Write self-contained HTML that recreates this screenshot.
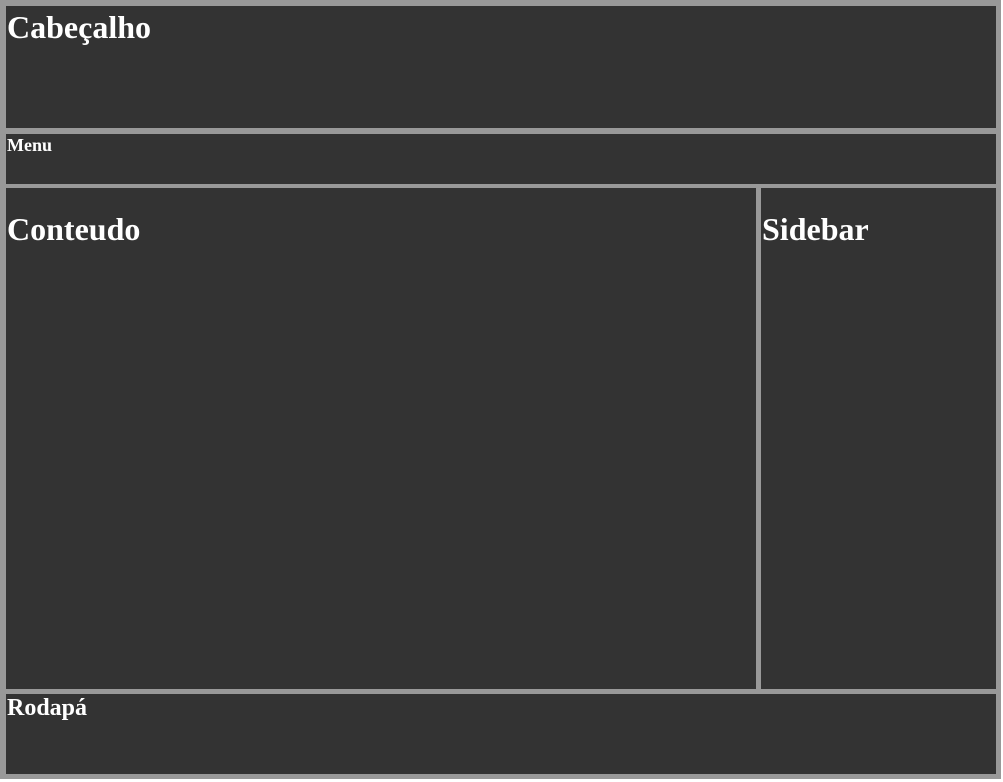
<!DOCTYPE html>
<html><head><meta charset="utf-8"><style>
body{margin:0;width:1003px;height:782px;background:#fff;position:relative;overflow:hidden;font-family:"Liberation Serif",serif;color:#fff}
.bg{position:absolute;left:0;top:0;width:1001px;height:779px;background:#999}
.p{position:absolute;background:#333;font-weight:bold;line-height:1}
.p span{position:absolute;left:1px}
</style></head><body>
<div class="bg"></div>
<div class="p" style="left:6px;top:6px;width:990px;height:122px"><span style="font-size:32px;top:5px">Cabeçalho</span></div>
<div class="p" style="left:6px;top:134px;width:990px;height:50px"><span style="font-size:18px;top:2px">Menu</span></div>
<div class="p" style="left:6px;top:188px;width:750px;height:501px"><span style="font-size:32px;top:25px">Conteudo</span></div>
<div class="p" style="left:761px;top:188px;width:235px;height:501px"><span style="font-size:32px;top:25px">Sidebar</span></div>
<div class="p" style="left:6px;top:694px;width:990px;height:80px"><span style="font-size:24px;top:2px">Rodapá</span></div>
</body></html>
